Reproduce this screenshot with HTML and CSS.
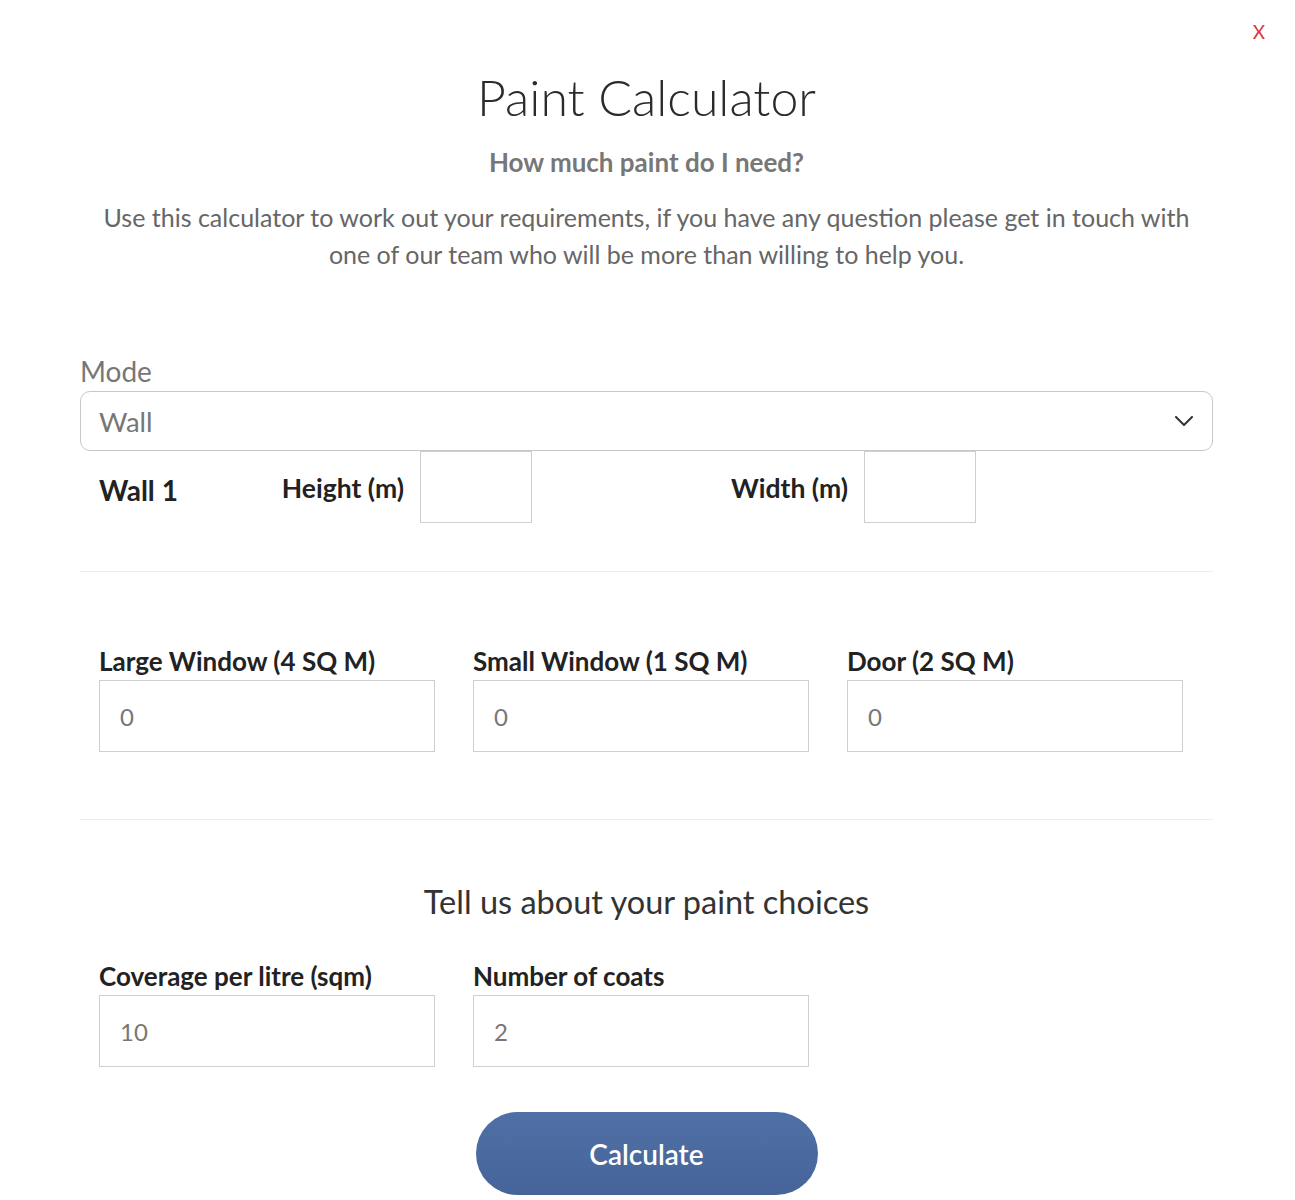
FILE: index.html
```html
<!DOCTYPE html>
<html lang="en">
<head>
<meta charset="utf-8">
<title>Paint Calculator</title>
<link rel="stylesheet" href="styles.css">
</head>
<body>
<div class="modal">
  <button class="close" type="button">X</button>
  <h1 class="title">Paint Calculator</h1>
  <h2 class="subtitle">How much paint do I need?</h2>
  <p class="intro">Use this calculator to work out your requirements, if you have any question please get in touch with one of our team who will be more than willing to help you.</p>

  <label class="mode-label">Mode</label>
  <div class="select">
    <span class="select-value">Wall</span>
    <svg class="chevron" width="18" height="10" viewBox="0 0 18 10"><polyline points="1,1 9,9 17,1" fill="none" stroke="#333" stroke-width="2" stroke-linecap="round" stroke-linejoin="round"/></svg>
  </div>

  <div class="wall-row">
    <div class="wall-name">Wall 1</div>
    <div class="dim-label">Height (m)</div>
    <div class="dim-input"></div>
    <div class="dim-label">Width (m)</div>
    <div class="dim-input"></div>
  </div>

  <div class="divider"></div>

  <div class="fields fields-openings">
    <div class="field">
      <div class="field-label">Large Window (4 SQ M)</div>
      <div class="field-input">0</div>
    </div>
    <div class="field">
      <div class="field-label">Small Window (1 SQ M)</div>
      <div class="field-input">0</div>
    </div>
    <div class="field">
      <div class="field-label">Door (2 SQ M)</div>
      <div class="field-input">0</div>
    </div>
  </div>

  <div class="divider divider-second"></div>

  <h3 class="section-heading">Tell us about your paint choices</h3>

  <div class="fields fields-paint">
    <div class="field">
      <div class="field-label">Coverage per litre (sqm)</div>
      <div class="field-input">10</div>
    </div>
    <div class="field">
      <div class="field-label">Number of coats</div>
      <div class="field-input">2</div>
    </div>
  </div>

  <div class="actions">
    <button class="calculate" type="button">Calculate</button>
  </div>
</div>
</body>
</html>
```

FILE: styles.css
```css
* { box-sizing: border-box; }

html, body {
  margin: 0;
  padding: 0;
  background: #ffffff;
}

body {
  font-family: "Lato", "Open Sans", sans-serif;
  color: #222;
}

.modal {
  position: relative;
  width: 1295px;
  padding: 67px 82px 40px 80px;
}

.close {
  position: absolute;
  top: 22px;
  right: 30px;
  border: 0;
  background: none;
  padding: 0;
  font-family: "Lato", sans-serif;
  font-size: 19px;
  line-height: 20px;
  color: #d9363e;
  cursor: pointer;
}

.title {
  margin: 0;
  text-align: center;
  font-weight: 300;
  font-size: 50px;
  line-height: 60px;
  color: #2b2b2b;
}

.subtitle {
  margin: 20px 0 0;
  text-align: center;
  font-weight: 700;
  font-size: 26px;
  line-height: 30px;
  color: #777;
}

.intro {
  margin: 22px 0 0;
  text-align: center;
  font-size: 25px;
  line-height: 37px;
  color: #666;
}

.mode-label {
  display: block;
  margin-top: 82px;
  font-size: 28px;
  line-height: 32px;
  color: #777;
}

.select {
  margin-top: 4px;
  height: 60px;
  border: 1px solid #c8c8c8;
  border-radius: 10px;
  display: flex;
  align-items: center;
  justify-content: space-between;
  padding: 0 19px 0 18px;
}

.select-value {
  font-size: 27.5px;
  color: #777;
}

.wall-row {
  display: grid;
  grid-template-columns: 201px 139px 112px 332px 112px;
  height: 72px;
  align-items: center;
}

.wall-name {
  padding-left: 19px;
  padding-top: 6px;
  font-weight: 700;
  font-size: 28px;
  color: #222;
}

.dim-label {
  text-align: right;
  padding-right: 16px;
  padding-top: 2px;
  font-weight: 700;
  font-size: 26.5px;
  color: #222;
  white-space: nowrap;
}

.dim-input {
  height: 72px;
  border: 1px solid #cfcfcf;
}

.divider {
  margin-top: 48px;
  border-top: 1px solid #eeeeee;
}

.divider-second {
  margin-top: 67px;
}

.fields {
  display: grid;
  grid-template-columns: repeat(3, 336px);
  column-gap: 38px;
  padding-left: 19px;
}

.fields-openings { margin-top: 74px; }
.fields-paint { margin-top: 39px; }

.field-label {
  font-weight: 700;
  font-size: 26px;
  line-height: 30px;
  color: #222;
  white-space: nowrap;
}

.field-input {
  margin-top: 4px;
  height: 72px;
  border: 1px solid #cfcfcf;
  padding-left: 20px;
  display: flex;
  align-items: center;
  font-size: 24px;
  color: #777;
}

.section-heading {
  margin: 62px 0 0;
  text-align: center;
  font-weight: 400;
  font-size: 32.5px;
  line-height: 40px;
  color: #333;
}

.actions {
  display: flex;
  justify-content: center;
  margin-top: 45px;
}

.calculate {
  width: 342px;
  height: 83px;
  border: 0;
  border-radius: 42px;
  background: linear-gradient(#4f70a6, #46649a);
  color: #fff;
  font-family: "Lato", sans-serif;
  font-weight: 600;
  font-size: 28px;
  cursor: pointer;
}
```
